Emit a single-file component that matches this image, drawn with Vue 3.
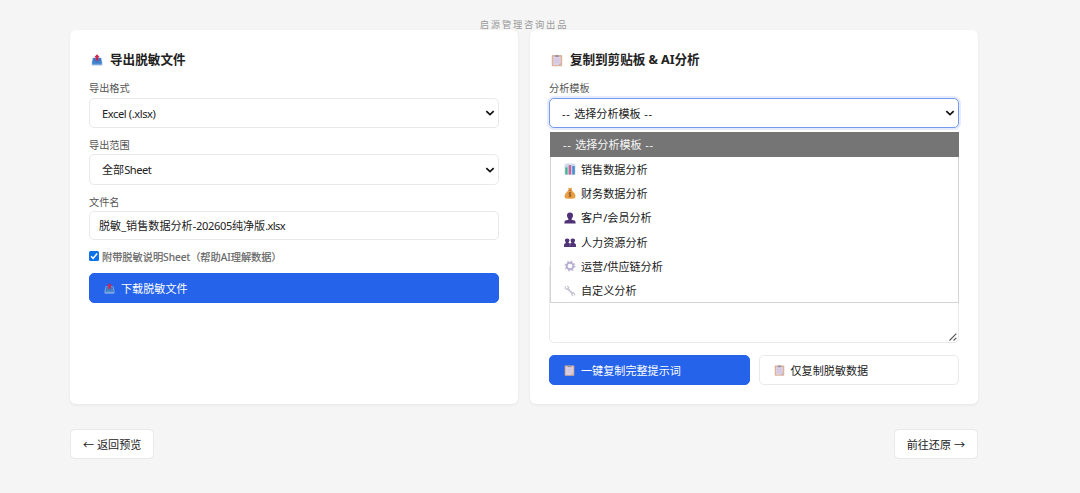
<script setup>
const options = [
  { icon: 'chart', text: '销售数据分析' },
  { icon: 'money', text: '财务数据分析' },
  { icon: 'user', text: '客户/会员分析' },
  { icon: 'users', text: '人力资源分析' },
  { icon: 'gear', text: '运营/供应链分析' },
  { icon: 'wrench', text: '自定义分析' },
]
</script>

<template>
  <svg class="defs" aria-hidden="true">
    <symbol id="export" viewBox="0 0 12 12">
      <path d="M1.700 3.700h8.600l1 4.500v3.300H.7V8.200z" fill="#a9c3e6" />
      <path d="M2 4h8l.7 5.200H1.300z" fill="#3f7cc8" />
      <path d="M1.200 8h2.600l.8 1.100h2.800l.8-1.100h2.600v2.400H1.200z" fill="#4a8ad0" />
      <path d="M6 .2 8.800 3.200H7.300v3.200H4.700V3.200H3.200z" fill="#c9284f" />
    </symbol>
    <symbol id="clip" viewBox="0 0 12 12">
      <rect x=".8" y=".6" width="10.400" height="11.200" rx=".8" fill="#dfb296" />
      <path d="M2.300 2h7.400v8.600H2.300z" fill="#ddd3e8" />
      <path d="M4 .7h1.100a1 1 0 0 1 1.800 0H8v1.700H4z" fill="#9b94aa" />
      <path d="M3.400 4.700h5.200M3.400 6.400h5.200M3.400 8.100h5.200" stroke="#c6bad6" stroke-width=".6" />
      <path d="M7.400 10.600 9.700 8.300v2.300z" fill="#bdaed0" />
    </symbol>
    <symbol id="chart" viewBox="0 0 12 12">
      <rect x=".6" y=".6" width="10.800" height="11" fill="#cfdfee" />
      <path d="M.6 4h10.800M.6 8h10.800M4 .6v11M8 .6v11" stroke="#afc5da" stroke-width=".5" />
      <rect x="1.300" y="4.400" width="2.200" height="7.200" fill="#45b28e" />
      <rect x="4.700" y="2.200" width="2.400" height="9.400" fill="#d0609a" />
      <rect x="8.300" y="3" width="2.500" height="8.600" fill="#4a8bd0" />
    </symbol>
    <symbol id="money" viewBox="0 0 12 12">
      <path d="M4.200.6 6 1.200 8 .5 7.400 3.300C10.200 5 12 8 11.400 10c-.4 1.700-2 1.800-5.400 1.800S.9 11.600.6 10C.2 8 2 5 4.800 3.300z" fill="#e9a044" />
      <path d="M4.500 3.200h3.200" stroke="#b26637" stroke-width="1" />
      <path d="M7.300 5.800C4.700 5 4.300 7.200 6 7.400s1.800 2.400-1.400 1.800M6 4.900v5.400" fill="none" stroke="#8a4d25" stroke-width=".8" />
    </symbol>
    <symbol id="user" viewBox="0 0 12 12">
      <path d="M6 .5c2.300 0 3.200 1.300 3 3.300C8.900 5.200 8.200 6.300 7.600 6.900v.8l2.800.9c1 .4 1.200 1 1.200 2.900H.4c0-1.900.2-2.500 1.200-2.900l2.800-.9v-.8C3.800 6.300 3.100 5.200 3 3.800 2.800 1.800 3.700.5 6 .5z" fill="#503377" />
    </symbol>
    <symbol id="users" viewBox="0 0 12 12">
      <path d="M3.200 2.400c1.700 0 2.300.8 2.200 2.200 0 .9-.5 1.500-.8 1.900v.6l1.400.5 1.400-.5v-.6c-.3-.4-.8-1-.8-1.900-.1-1.400.5-2.200 2.200-2.200s2.300.8 2.200 2.200c0 .9-.5 1.500-.8 1.900v.6l1.200.6c.5.300.6.900.6 3.400H0c0-2.500.1-3.100.6-3.400l1.200-.6v-.6c-.3-.4-.8-1-.8-1.900C.9 3.200 1.500 2.400 3.200 2.400z" fill="#503377" />
      <path d="M6 7.800v2.400" stroke="#9686ae" stroke-width=".6" />
    </symbol>
    <symbol id="gear" viewBox="0 0 12 12">
      <circle cx="6" cy="6" r="4.800" fill="none" stroke="#c3bbd4" stroke-width="1.300" stroke-dasharray="1.885 1.885" />
      <circle cx="6" cy="6" r="3.300" fill="none" stroke="#b8aed0" stroke-width="1.900" />
    </symbol>
    <symbol id="wrench" viewBox="0 0 12 12">
      <path d="M3.300 3.400 8.900 8.900" stroke="#c6c1d0" stroke-width="1.700" />
      <path d="M1.300 1.300v1.900l1.400 1.200 1.600-.4.400-1.600-1.500-1.400M10.700 10.500V8.900L9.300 7.700l-1.400.4-.3 1.500 1.500 1.300" fill="none" stroke="#c6c1d0" stroke-width="1.100" />
    </symbol>
    <symbol id="chev" viewBox="0 0 10 8">
      <path d="M1.300 2.200 5 5.600l3.700-3.400" fill="none" stroke="#111" stroke-width="1.700" />
    </symbol>
  </svg>

  <div class="page">
    <header class="brand">启源管理咨询出品</header>
    <main class="cards">
      <section class="card">
        <h2><svg class="ico"><use href="#export" /></svg><span>导出脱敏文件</span></h2>
        <label class="label">导出格式</label>
        <div class="field select"><span class="latin">Excel (.xlsx)</span><svg class="chev"><use href="#chev" /></svg></div>
        <label class="label second">导出范围</label>
        <div class="field select tall"><span>全部<i class="sheet">Sheet</i></span><svg class="chev"><use href="#chev" /></svg></div>
        <label class="label third">文件名</label>
        <div class="field input"><span>脱敏_销售数据分析<i class="digits">-202605</i>纯净版<i class="ext">.xlsx</i></span></div>
        <div class="check">
          <svg class="box" viewBox="0 0 10 10"><rect width="10" height="10" rx="1.500" fill="#0b72e8" /><path d="m2 5.200 2.100 2.100L8.200 2.600" fill="none" stroke="#fff" stroke-width="1.500" /></svg>
          <span>附带脱敏说明Sheet（帮助AI理解数据）</span>
        </div>
        <div class="btn primary"><svg class="ico small"><use href="#export" /></svg><span>下载脱敏文件</span></div>
      </section>

      <section class="card">
        <h2><svg class="ico clip"><use href="#clip" /></svg><span class="tight">复制到剪贴板 &amp; AI分析</span></h2>
        <label class="label">分析模板</label>
        <div class="field select focus">
          <span><i class="dash">--&nbsp;</i>选择分析模板<i class="dash">&nbsp;--</i></span><svg class="chev"><use href="#chev" /></svg>
          <div class="menu">
            <div class="opt head"><span><i class="dash">--&nbsp;</i>选择分析模板<i class="dash">&nbsp;--</i></span></div>
            <div v-for="o in options" :key="o.icon" class="opt">
              <svg class="ico"><use :href="'#' + o.icon" /></svg><span>{{ o.text }}</span>
            </div>
          </div>
        </div>
        <div class="area">
          <svg class="grip" viewBox="0 0 8 8"><path d="M.5 7.500 7.300.7M4.600 7.500l2.700-2.700" stroke="#555" stroke-width="1.100" /></svg>
        </div>
        <div class="row">
          <div class="btn primary"><svg class="ico small"><use href="#clip" /></svg><span>一键复制完整提示词</span></div>
          <div class="btn"><svg class="ico small"><use href="#clip" /></svg><span>仅复制脱敏数据</span></div>
        </div>
      </section>
    </main>
    <nav class="nav">
      <div class="btn"><span>← 返回预览</span></div>
      <div class="btn"><span>前往还原 →</span></div>
    </nav>
  </div>
</template>

<style>
body { background: #f5f5f5; }
</style>

<style scoped>
.defs { position: absolute; width: 0; height: 0; }
.page {
  box-sizing: border-box;
  height: 493px;
  padding: 17px 102px 0 70px;
  background: #f5f5f5;
  color: #222;
  font: 11.1px/16px "Noto Sans", "Noto Sans CJK SC", sans-serif;
  white-space: nowrap;
  overflow: hidden;
}
i { font-style: normal; }
.brand {
  height: 13px;
  line-height: 15px;
  text-align: center;
  font-size: 9.3px;
  letter-spacing: 1.75px;
  color: #999;
}
.cards { display: grid; grid-template-columns: 448px 448px; gap: 12px; height: 374px; }
.card {
  box-sizing: border-box;
  padding: 19px 19px 0;
  background: #fff;
  border-radius: 6px;
  box-shadow: 0 1px 3px rgba(0, 0, 0, .07);
}
h2 {
  display: flex;
  align-items: center;
  height: 22px;
  margin: 0 0 9px;
  padding-left: 2px;
  gap: 7px;
  font-size: 12.6px;
  font-weight: 700;
}
.tight { letter-spacing: -.06px; }
.ico { width: 12px; height: 12px; flex: none; }
.small { width: 11px; height: 11px; margin-right: 1px; }
.clip { height: 13px; }
.label { display: block; height: 16px; margin-bottom: 2px; font-size: 10.2px; color: #555; }
.label.second { margin-top: 9px; margin-bottom: 1px; }
.label.third { margin-top: 9px; margin-bottom: 1px; }
.field {
  box-sizing: border-box;
  display: flex;
  align-items: center;
  justify-content: space-between;
  height: 30px;
  border: 1px solid #e9e9e9;
  border-radius: 5px;
  padding: 1px 3px 0 12px;
  background: #fff;
}
.tall { height: 31px; }
.input { height: 29px; padding-left: 9px; }
.latin { letter-spacing: -.4px; }
.sheet { letter-spacing: -.5px; }
.digits { letter-spacing: -.35px; }
.ext { letter-spacing: -.6px; }
.dash { letter-spacing: .7px; }
.chev { width: 10px; height: 8px; margin-top: -1px; }
.focus { position: relative; border-color: #7798ef; box-shadow: 0 0 0 2px #e6ecfc; }
.menu {
  position: absolute;
  z-index: 2;
  top: 33px;
  left: 0;
  right: -1px;
  box-sizing: border-box;
  height: 171px;
  border: 1px solid #d4d4d4;
  border-top: 0;
  background: #fff;
}
.opt { display: flex; align-items: center; gap: 5px; height: 24.3px; padding-left: 13px; color: #1a1a1a; }
.opt span { margin-top: 1px; }
.opt.head { height: 25px; margin: 0 -1px; padding-left: 13px; background: #757575; color: #f5f5f5; }
.check { display: flex; align-items: center; height: 16px; margin: 9px 0 8px; gap: 3px; font-size: 10.2px; color: #666; -webkit-text-stroke: .2px #666; }
.box { width: 10px; height: 10px; margin-top: -3px; }
.btn {
  box-sizing: border-box;
  display: flex;
  align-items: center;
  height: 30px;
  gap: 5px;
  padding: 1px 14px 0;
  border: 1px solid #e9e9e9;
  border-radius: 5px;
  background: #fff;
}
.btn.primary { border-color: #2563eb; background: #2563eb; color: #fff; }
.area {
  box-sizing: border-box;
  display: flex;
  align-items: flex-end;
  justify-content: flex-end;
  height: 80px;
  margin-top: 135px;
  padding: 1px;
  border: 1px solid #e9e9e9;
  border-radius: 5px;
}
.grip { width: 8px; height: 8px; }
.row { display: grid; grid-template-columns: 1fr 1fr; gap: 9px; margin-top: 12px; }
.nav { display: flex; justify-content: space-between; margin-top: 25px; }
.nav .btn { padding: 1px 12px 0; }
</style>
